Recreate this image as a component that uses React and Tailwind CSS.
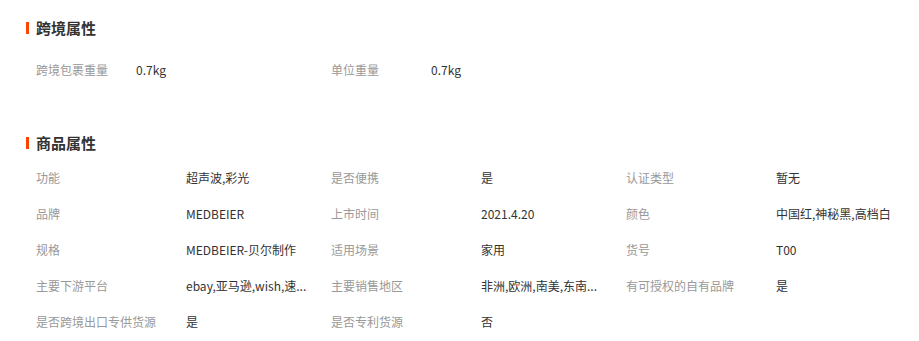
const crossBorder = [
  ["跨境包裹重量", "0.7kg"],
  ["单位重量", "0.7kg"],
];

// long values are shown clipped, full text kept in title
const productAttrs = [
  ["功能", "超声波,彩光"],
  ["是否便携", "是"],
  ["认证类型", "暂无"],
  ["品牌", "MEDBEIER"],
  ["上市时间", "2021.4.20"],
  ["颜色", "中国红,神秘黑,高档白"],
  ["规格", "MEDBEIER-贝尔制作"],
  ["适用场景", "家用"],
  ["货号", "T00"],
  ["主要下游平台", "ebay,亚马逊,wish,速...", "ebay,亚马逊,wish,速卖通"],
  ["主要销售地区", "非洲,欧洲,南美,东南...", "非洲,欧洲,南美,东南亚"],
  ["有可授权的自有品牌", "是"],
  ["是否跨境出口专供货源", "是"],
  ["是否专利货源", "否"],
];

const font = { fontFamily: '"Microsoft YaHei", "Noto Sans CJK SC", "Liberation Sans", sans-serif' };

const Heading = ({ children }) => (
  <div className="flex items-center h-[20px] pl-[26px]">
    <span className="w-[3px] h-[12px] bg-[#ff4400]" />
    <span className="ml-[7px] text-[15px] leading-[20px] font-bold text-[#333]">{children}</span>
  </div>
);

const Attr = ({ label, value, full, labelW, valueW }) => (
  <div className="flex items-center h-[36px] text-[12px]">
    <div className={`${labelW} shrink-0 text-[#999] whitespace-nowrap`}>{label}</div>
    <div className={`${valueW} shrink-0 text-[#333] whitespace-nowrap`} title={full || value}>
      {value}
    </div>
  </div>
);

export default function App() {
  return (
    <div className="w-[919px] h-[341px] bg-white pt-[18px]" style={font}>
      <Heading>跨境属性</Heading>
      <div className="flex pl-[36px] mt-[14px]">
        {crossBorder.map(([l, v]) => (
          <Attr key={l} label={l} value={v} labelW="w-[100px]" valueW="w-[195px]" />
        ))}
      </div>

      <div className="mt-[45px]">
        <Heading>商品属性</Heading>
      </div>
      <div className="grid grid-cols-[295px_295px_295px] pl-[36px] mt-[7px]">
        {productAttrs.map(([l, v, f]) => (
          <Attr key={l} label={l} value={v} full={f} labelW="w-[150px]" valueW="w-[145px]" />
        ))}
      </div>
    </div>
  );
}
